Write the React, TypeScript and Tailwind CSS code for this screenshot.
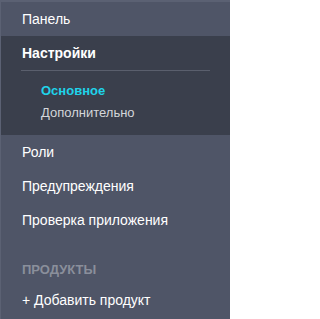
import React from "react";

export default function App() {
  const font = { fontFamily: '"Liberation Sans", Arial, sans-serif' };
  return (
    <div
      className="w-[230px] h-[319px] bg-[#4f5567] border-t-2 border-l border-t-[#5b6173] border-l-[#5b6173] overflow-hidden antialiased"
      style={font}
    >
      <div className="h-[34px] flex items-center pl-[21px] text-[14px] leading-5 text-white">
        Панель
      </div>
      <div className="bg-[#3a3f4c] pt-[7px] pb-[11px]">
        <div className="pl-[21px] text-[14px] leading-5 font-bold text-white">
          Настройки
        </div>
        <div className="mx-[20px] mt-[7px] h-px bg-[#5a5f6d]" />
        <div className="pt-[9px]">
          <div className="pl-[40px] text-[13px] leading-[22px] font-bold text-[#1fd3ea]">
            Основное
          </div>
          <div className="pl-[40px] text-[13px] leading-[22px] text-[#d4d6da]">
            Дополнительно
          </div>
        </div>
      </div>
      <div className="h-[34px] flex items-center pl-[21px] text-[14px] leading-5 text-white">
        Роли
      </div>
      <div className="h-[34px] flex items-center pl-[21px] text-[14px] leading-5 text-white">
        Предупреждения
      </div>
      <div className="h-[34px] flex items-center pl-[21px] text-[14px] leading-5 text-white">
        Проверка приложения
      </div>
      <div className="mt-[23px] h-[20px] flex items-center pl-[21px] text-[13px] font-bold uppercase text-[#8a8f9b]">
        Продукты
      </div>
      <div className="mt-[3px] h-[34px] flex items-center pl-[21px] text-[14px] leading-5 text-white">
        + Добавить продукт
      </div>
    </div>
  );
}
